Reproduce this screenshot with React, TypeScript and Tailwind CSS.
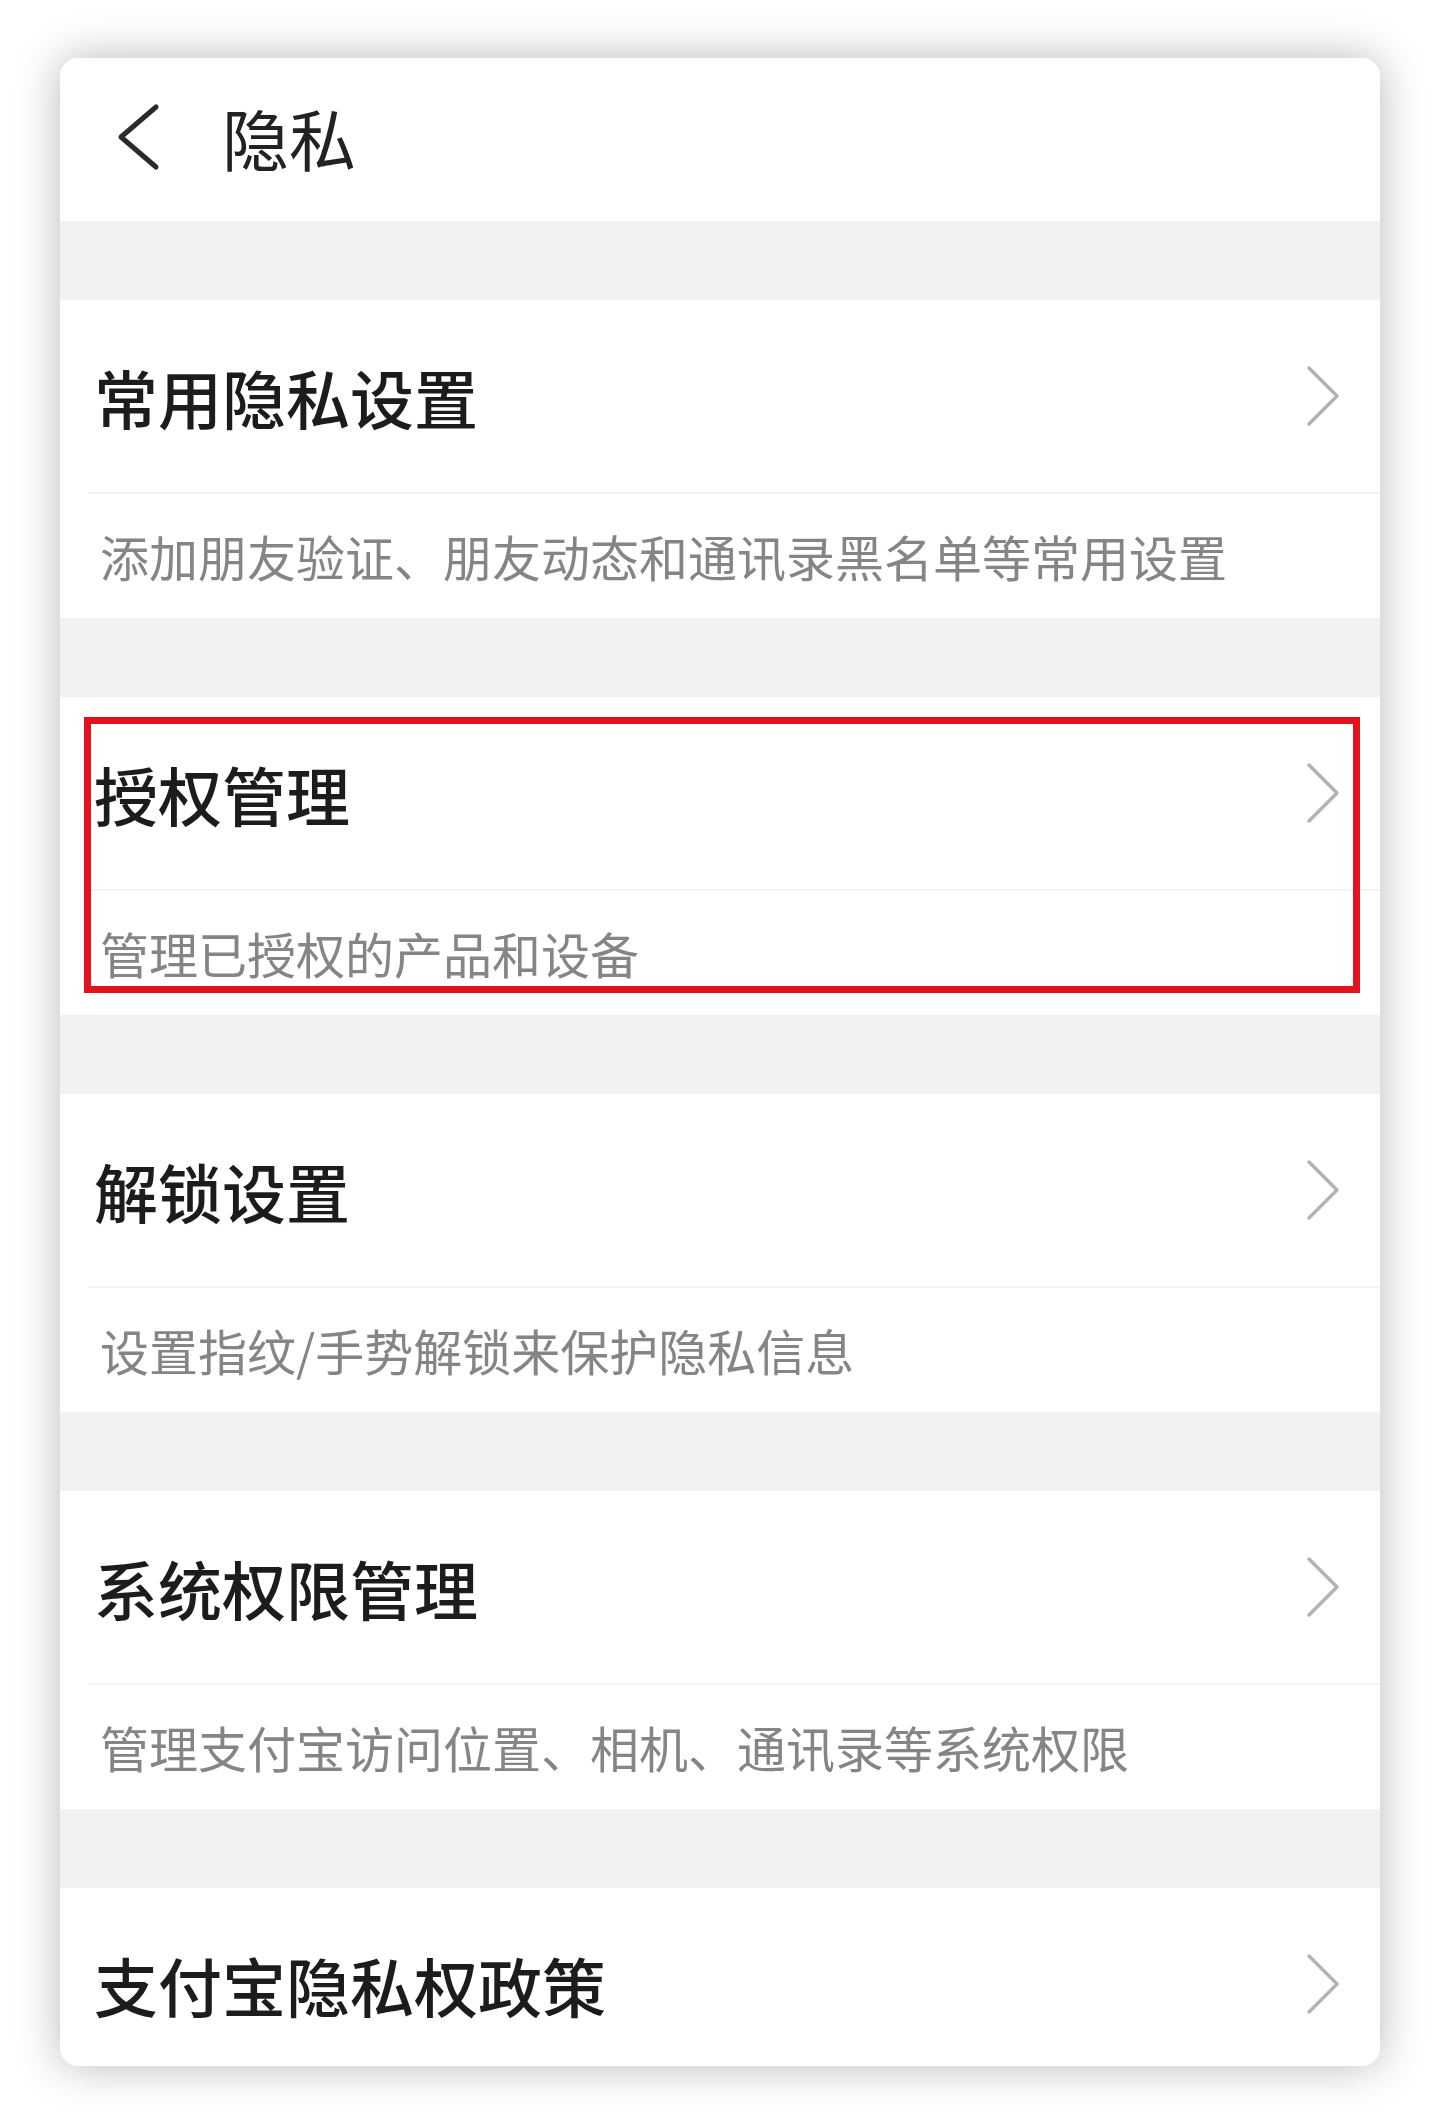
import React from "react";

const items = [
  { title: "常用隐私设置", sub: "添加朋友验证、朋友动态和通讯录黑名单等常用设置" },
  { title: "授权管理", sub: "管理已授权的产品和设备", highlight: true },
  { title: "解锁设置", sub: "设置指纹/手势解锁来保护隐私信息" },
  { title: "系统权限管理", sub: "管理支付宝访问位置、相机、通讯录等系统权限" },
];

function ChevronRight() {
  return (
    <svg width="36" height="62" viewBox="0 0 36 62" fill="none" className="shrink-0">
      <path d="M4 3 L32 31 L4 59" stroke="#b3b3b3" strokeWidth="3.5" strokeLinecap="round" strokeLinejoin="round" />
    </svg>
  );
}

function TitleRow({ title }: { title: string }) {
  return (
    <div className="flex h-[192px] items-center justify-between pl-[34px] pr-[39px]">
      <span className="text-[64px] font-medium leading-none text-[#1c1c1c]">{title}</span>
      <ChevronRight />
    </div>
  );
}

export default function App() {
  return (
    <div
      className="min-h-[2125px] bg-white px-[60px] pt-[58px]"
      style={{ fontFamily: '"Noto Sans CJK SC", "Noto Sans", sans-serif' }}
    >
      <div className="flex h-[2008px] flex-col overflow-hidden rounded-[18px] bg-[#f2f2f2] shadow-[0_0_45px_rgba(0,0,0,0.28)]">
        <div className="flex h-[163px] shrink-0 items-center bg-white pb-[6px] pl-[55px]">
          <svg width="46" height="68" viewBox="0 0 46 68" fill="none">
            <path d="M41 4 L6 34 L41 64" stroke="#2a2a2a" strokeWidth="5" strokeLinecap="round" strokeLinejoin="round" />
          </svg>
          <span className="ml-[61px] text-[67px] leading-none text-[#222]">隐私</span>
        </div>
        {items.map((it) => (
          <React.Fragment key={it.title}>
            <div className="h-[79px] shrink-0 bg-[#f2f2f2]" />
            <div className="relative h-[318px] shrink-0 bg-white">
              <TitleRow title={it.title} />
              <div className="ml-[28px] h-[2px] bg-[#f3f3f3]" />
              <div className="flex h-[124px] items-center pl-[40px] pb-[2px]">
                <span className="text-[49px] leading-none text-[#858585]">{it.sub}</span>
              </div>
              {it.highlight && (
                <div className="absolute left-[24px] top-[20px] h-[276px] w-[1276px] border-[7px] border-[#e3131e]" />
              )}
            </div>
          </React.Fragment>
        ))}
        <div className="h-[79px] shrink-0 bg-[#f2f2f2]" />
        <div className="flex-1 bg-white">
          <TitleRow title="支付宝隐私权政策" />
        </div>
      </div>
    </div>
  );
}
